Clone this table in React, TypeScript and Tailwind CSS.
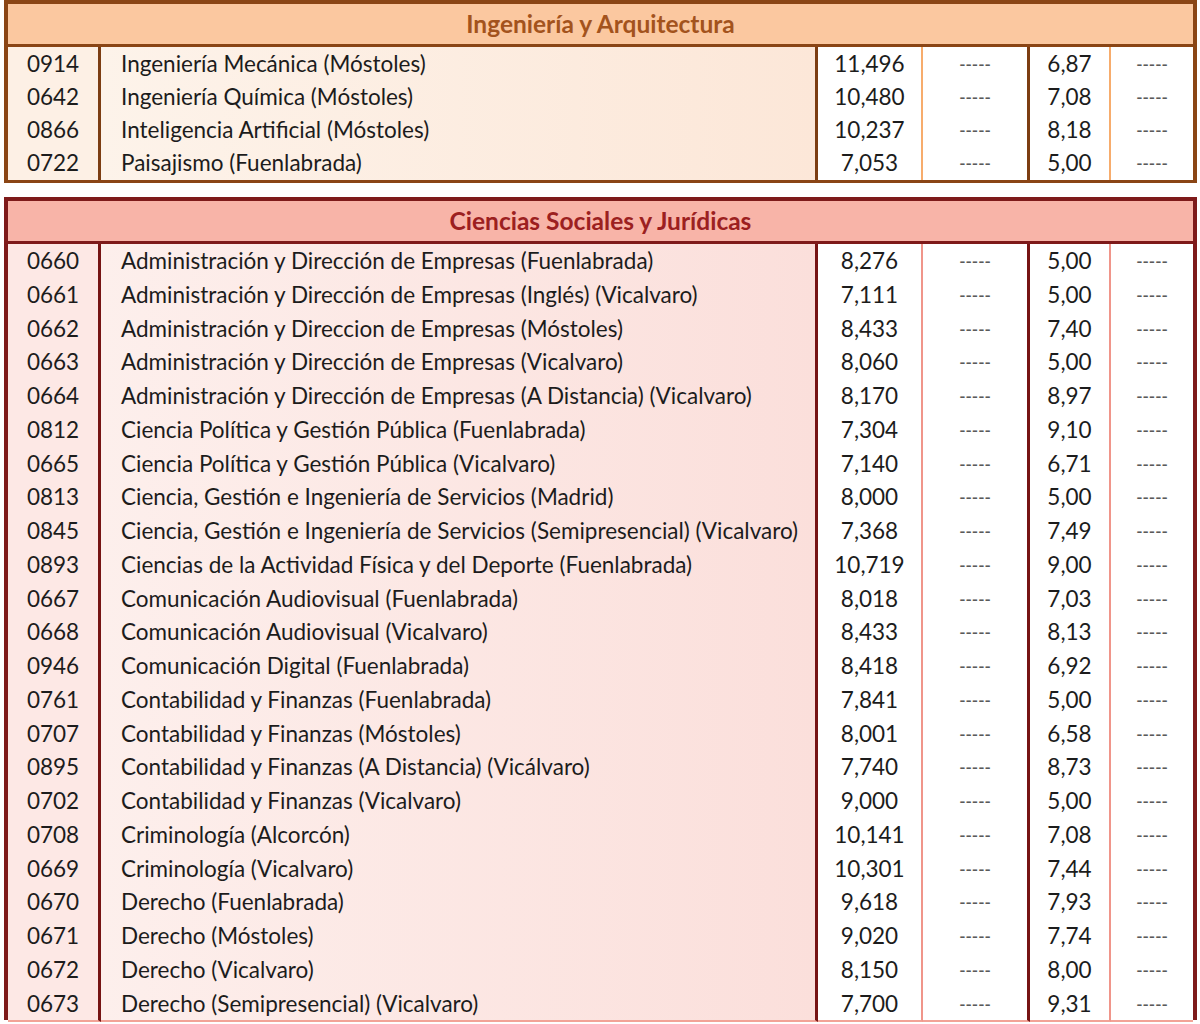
import React from "react";

type Row = [string, string, string, string];

const ingenieria: Row[] = [
  ["0914", "Ingeniería Mecánica (Móstoles)", "11,496", "6,87"],
  ["0642", "Ingeniería Química (Móstoles)", "10,480", "7,08"],
  ["0866", "Inteligencia Artificial (Móstoles)", "10,237", "8,18"],
  ["0722", "Paisajismo (Fuenlabrada)", "7,053", "5,00"],
];

const sociales: Row[] = [
  ["0660", "Administración y Dirección de Empresas (Fuenlabrada)", "8,276", "5,00"],
  ["0661", "Administración y Dirección de Empresas (Inglés) (Vicalvaro)", "7,111", "5,00"],
  ["0662", "Administración y Direccion de Empresas (Móstoles)", "8,433", "7,40"],
  ["0663", "Administración y Dirección de Empresas (Vicalvaro)", "8,060", "5,00"],
  ["0664", "Administración y Dirección de Empresas (A Distancia) (Vicalvaro)", "8,170", "8,97"],
  ["0812", "Ciencia Política y Gestión Pública (Fuenlabrada)", "7,304", "9,10"],
  ["0665", "Ciencia Política y Gestión Pública (Vicalvaro)", "7,140", "6,71"],
  ["0813", "Ciencia, Gestión e Ingeniería de Servicios (Madrid)", "8,000", "5,00"],
  ["0845", "Ciencia, Gestión e Ingeniería de Servicios (Semipresencial) (Vicalvaro)", "7,368", "7,49"],
  ["0893", "Ciencias de la Actividad Física y del Deporte (Fuenlabrada)", "10,719", "9,00"],
  ["0667", "Comunicación Audiovisual (Fuenlabrada)", "8,018", "7,03"],
  ["0668", "Comunicación Audiovisual (Vicalvaro)", "8,433", "8,13"],
  ["0946", "Comunicación Digital (Fuenlabrada)", "8,418", "6,92"],
  ["0761", "Contabilidad y Finanzas (Fuenlabrada)", "7,841", "5,00"],
  ["0707", "Contabilidad y Finanzas (Móstoles)", "8,001", "6,58"],
  ["0895", "Contabilidad y Finanzas (A Distancia) (Vicálvaro)", "7,740", "8,73"],
  ["0702", "Contabilidad y Finanzas (Vicalvaro)", "9,000", "5,00"],
  ["0708", "Criminología (Alcorcón)", "10,141", "7,08"],
  ["0669", "Criminología (Vicalvaro)", "10,301", "7,44"],
  ["0670", "Derecho (Fuenlabrada)", "9,618", "7,93"],
  ["0671", "Derecho (Móstoles)", "9,020", "7,74"],
  ["0672", "Derecho (Vicalvaro)", "8,150", "8,00"],
  ["0673", "Derecho (Semipresencial) (Vicalvaro)", "7,700", "9,31"],
];

interface Theme {
  outer: string;
  header: string;
  title: string;
  thick: string;
  thin: string;
  leftBg: string;
  nameBg: string;
  leftLine: string;
  numLine: string;
  rowH: string;
}

const orange: Theme = {
  outer: "border-[#8a4515]",
  header: "bg-[#fbc8a0] border-[#8a4515]",
  title: "text-[#a3531d]",
  thick: "border-r-[#7c3d12]",
  thin: "border-r-[#f7ac6c]",
  leftBg: "bg-[#fdf0e5]",
  nameBg: "bg-linear-to-r from-[#fdf3ea] to-[#fce7d8]",
  leftLine: "border-b-[#f6d2b5]",
  numLine: "border-b-[#f8bd8c]",
  rowH: "h-[33px]",
};

const red: Theme = {
  outer: "border-[#7e1a1a]",
  header: "bg-[#f8b4a8] border-[#7e1a1a]",
  title: "text-[#9c2020]",
  thick: "border-r-[#761414]",
  thin: "border-r-[#f0958a]",
  leftBg: "bg-[#fde8e5]",
  nameBg: "bg-linear-to-r from-[#fdefec] to-[#fbdfdb]",
  leftLine: "border-b-[#f2a397]",
  numLine: "border-b-[#f2a397]",
  rowH: "h-[33.75px]",
};

function Section({
  title,
  rows,
  t,
  open = false,
}: {
  title: string;
  rows: Row[];
  t: Theme;
  open?: boolean;
}) {
  return (
    <div className={`border-4 ${t.outer} ${open ? "border-b-0" : ""}`}>
      {/* Section header */}
      <div
        className={`flex h-[43px] items-center justify-center border-b-[3px] ${t.header}`}
      >
        <span className={`text-[24.5px] font-bold ${t.title}`}>{title}</span>
      </div>

      {rows.map(([code, name, v1, v2], i) => {
        const last = i === rows.length - 1 && !open;
        const left = last ? "" : `border-b-2 ${t.leftLine}`;
        const num = last ? "" : `border-b-2 ${t.numLine}`;
        return (
          <div
            key={code}
            className={`grid grid-cols-[93px_717px_105px_107px_81px_1fr] ${t.rowH} text-[22.5px] text-[#1c1c1c]`}
          >
            <div
              className={`flex items-center justify-center border-r-[3px] ${t.thick} ${t.leftBg} ${left}`}
            >
              {code}
            </div>
            <div
              className={`flex items-center border-r-[3px] pl-[20px] ${t.thick} ${t.nameBg} ${left}`}
            >
              {name}
            </div>
            <div
              className={`flex items-center justify-center border-r-2 bg-white ${t.thin} ${num}`}
            >
              {v1}
            </div>
            <div
              className={`flex items-center justify-center border-r-[3px] bg-white text-[17px] font-semibold text-[#5a5a5a] ${t.thick} ${num}`}
            >
              -----
            </div>
            <div
              className={`flex items-center justify-center border-r-2 bg-white ${t.thin} ${num}`}
            >
              {v2}
            </div>
            <div
              className={`flex items-center justify-center bg-white text-[17px] font-semibold text-[#5a5a5a] ${num}`}
            >
              -----
            </div>
          </div>
        );
      })}
    </div>
  );
}

export default function App() {
  return (
    <div
      className="h-[1024px] overflow-hidden bg-white px-[3px]"
      style={{ fontFamily: "Lato, 'Open Sans', sans-serif" }}
    >
      <div className="flex flex-col gap-[14px] pl-[1px]">
        <Section title="Ingeniería y Arquitectura" rows={ingenieria} t={orange} />
        <Section title="Ciencias Sociales y Jurídicas" rows={sociales} t={red} open />
      </div>
    </div>
  );
}
